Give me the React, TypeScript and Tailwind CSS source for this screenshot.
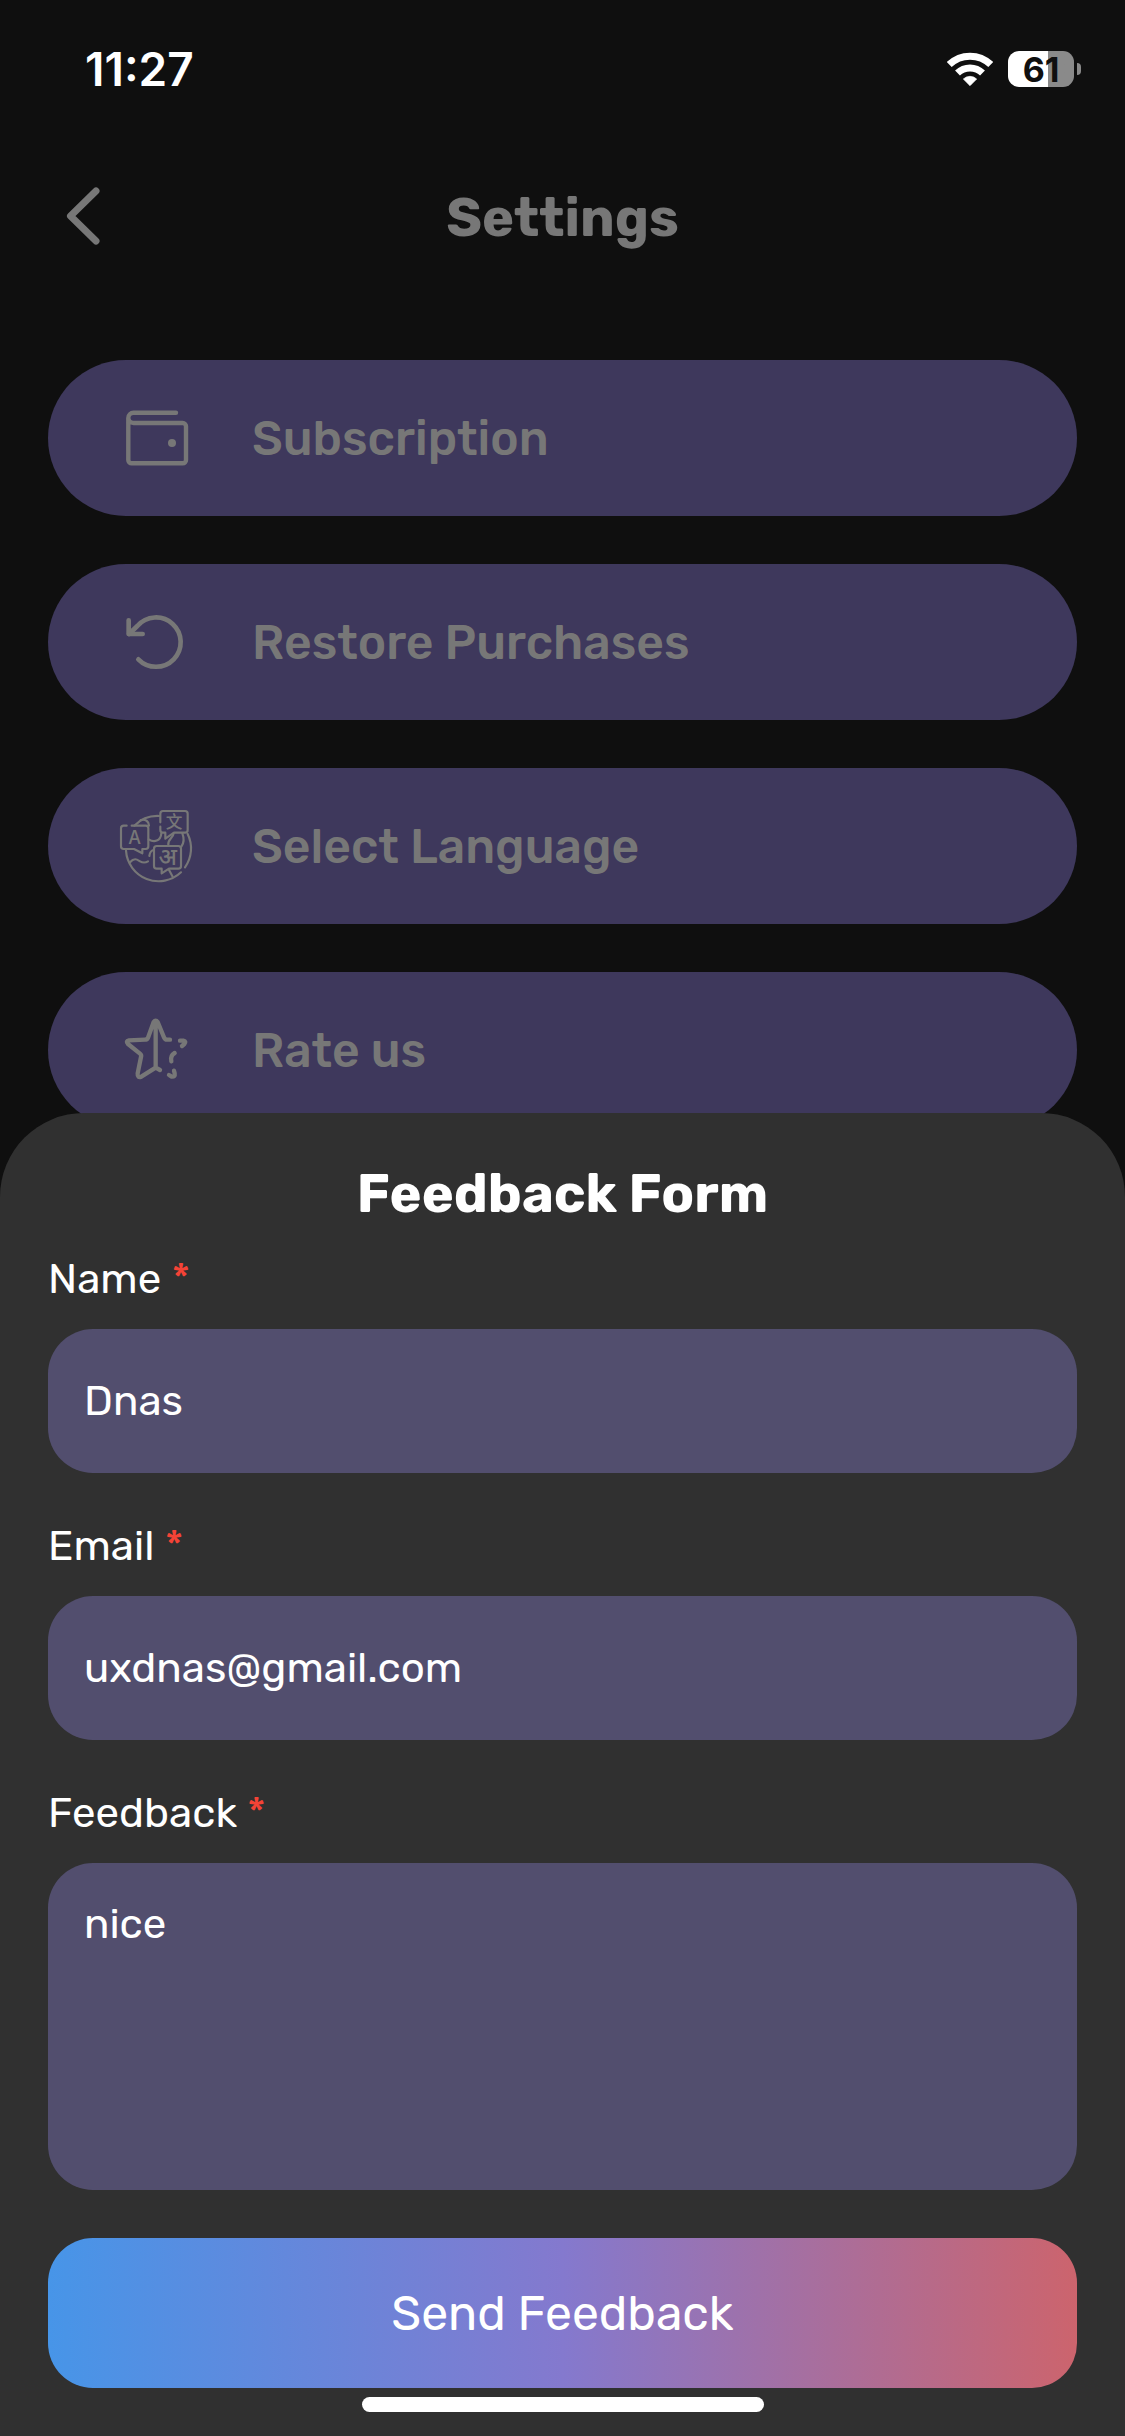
import { useState } from "react";

interface MenuItem {
  label: string;
  icon: React.ReactNode;
}

const MENU: MenuItem[] = [
  { label: "Subscription", icon: <WalletIcon /> },
  { label: "Restore Purchases", icon: <RestoreIcon /> },
  { label: "Select Language", icon: <LanguageIcon /> },
  { label: "Rate us", icon: <StarIcon /> },
];

const FIELD_CLS = "block w-full rounded-[45px] bg-[#524e6e] px-9 text-[42px] leading-[54px] text-white outline-none";

function WalletIcon() {
  return (
    <svg viewBox="0 0 80 80" className="size-20" fill="none" stroke="currentColor" strokeWidth="4.4" strokeLinecap="round" aria-hidden="true">
      <path d="M59 14.7H16.5a5.2 5.2 0 0 0-5.2 5.2V62a3.3 3.3 0 0 0 3.3 3.3H65.7A3.3 3.3 0 0 0 69 62V28.3a3.3 3.3 0 0 0-3.3-3.3H16.5a5.2 5.2 0 0 1-5.2-5.1" />
      <circle cx="55" cy="45" r="4" fill="currentColor" stroke="none" />
    </svg>
  );
}

function RestoreIcon() {
  return (
    <svg viewBox="51 36 240 240" className="size-20" fill="none" stroke="currentColor" strokeWidth="14" strokeLinecap="round" strokeLinejoin="round" aria-hidden="true">
      <path d="M115 208A74 74 0 1 0 112 108L87 132" />
      <path d="M86 91V132H128" />
    </svg>
  );
}

function LanguageIcon() {
  return (
    <svg viewBox="51 48 240 240" className="size-20" fill="none" stroke="currentColor" strokeWidth="6.5" strokeLinecap="round" strokeLinejoin="round" aria-hidden="true">
      <path d="M80 107H71Q63 107 63 115V169Q63 177 71 177H102L127 190V177H137Q145 177 145 169V115Q145 107 137 107H95" />
      <path d="M181 97V71Q181 63 189 63H255Q263 63 263 71V120Q263 128 255 128H222L196 146V128H189Q181 128 181 120V110" />
      <path d="M170 168H235Q243 168 243 176V228Q243 236 235 236H207L185 250V236H170Q162 236 162 228V176Q162 168 170 168Z" />
      <path d="M78 182A98 98 0 0 0 243 247M255 232A98 98 0 0 0 263 132M103 107A98 98 0 0 1 178 78" />
      <path d="M122 90Q145 86 147 107M146 148C162 158 182 154 184 130M90 217C104 201 113 210 120 214S136 219 144 214M148 198Q150 182 161 180M205 165C202 148 219 146 221 130M247 130Q256 153 244 170M206 238L218 260" />
      <g fill="currentColor" stroke="none" textAnchor="middle">
        <text x="104" y="161" fontSize="54" fontFamily="Inter, sans-serif">A</text>
        <text x="222" y="115" fontSize="50" fontFamily="'Noto Sans CJK SC', sans-serif">文</text>
        <text x="203" y="224" fontSize="70" fontFamily="'Noto Sans Devanagari', 'Noto Sans', sans-serif">अ</text>
      </g>
    </svg>
  );
}

function StarIcon() {
  return (
    <svg viewBox="51 30 240 240" className="size-20" fill="none" stroke="currentColor" strokeWidth="13" strokeLinecap="round" strokeLinejoin="round" aria-hidden="true">
      <path d="M210 119H201Q195 119 192 112L173 66Q167 58 161 66L144 113Q141 119 135 119L87 121Q76 123 84 132L120 161Q125 165 123 171L113 220Q112 235 124 230L167 203L180 210M167 64V203" />
      <path d="M240 122H250Q260 124 253 132L246 138M224 159Q210 167 214 184M207 225L215 230Q226 231 224 220L222 212" />
    </svg>
  );
}

function WifiIcon() {
  return (
    <svg viewBox="264 60 138 108" className="h-9 w-[46px]" fill="none" stroke="currentColor" aria-hidden="true">
      <path d="M270.8 100.6A89.5 89.5 0 0 1 395.2 100.6" strokeWidth="21" />
      <path d="M295.5 126.2A54 54 0 0 1 370.5 126.2" strokeWidth="21" />
      <path d="M333 164L313 144A29 29 0 0 1 353 144Z" fill="currentColor" strokeWidth="2" strokeLinejoin="round" />
    </svg>
  );
}

function FieldLabel({ htmlFor, children }: { htmlFor: string; children: React.ReactNode }) {
  return (
    <label htmlFor={htmlFor} className="mb-[19px] block text-[42px] leading-[62px] text-white">
      {children} <span className="text-[#f44336]">*</span>
    </label>
  );
}

export default function App() {
  const [name, setName] = useState("Dnas");
  const [email, setEmail] = useState("uxdnas@gmail.com");
  const [feedback, setFeedback] = useState("nice");

  return (
    <div className="relative min-h-screen overflow-hidden bg-[#0f0f0f] font-['Rubik','Inter',sans-serif]">
      <div className="flex h-[138px] items-center justify-between pr-11 pl-[85px] font-['Inter',sans-serif] text-white">
        <span className="text-[46px] font-semibold">11:27</span>
        <div className="flex items-center gap-[15px]">
          <WifiIcon />
          <div className="flex items-center gap-[3px]">
            <div className="flex h-9 w-[66px] items-center justify-center rounded-[11px] bg-linear-to-r from-white from-61% to-[#8a8a8a] to-61% text-[34px] font-bold text-[#0f0f0f]">
              61
            </div>
            <div className="h-3 w-1 rounded-r-full bg-[#8a8a8a]" />
          </div>
        </div>
      </div>

      <header className="grid h-40 grid-cols-[1fr_auto_1fr] items-center px-[60px] text-[#777777]">
        <button type="button" aria-label="Back" className="justify-self-start">
          <svg viewBox="0 0 48 64" className="h-16 w-12" fill="none" stroke="currentColor" strokeWidth="7" strokeLinecap="round" strokeLinejoin="round" aria-hidden="true">
            <path d="M36 5L10.500 30L36 55" />
          </svg>
        </button>
        <h1 className="text-[54px] leading-[66px] font-bold">Settings</h1>
      </header>

      <nav className="flex flex-col gap-12 px-12 pt-[62px]">
        {MENU.map((item) => (
          <button key={item.label} type="button"
            className="flex h-[156px] items-center gap-[55px] rounded-full bg-[#3e385c] pl-[69px] text-[48px] font-medium text-[#777777]">
            {item.icon}
            <span className="pt-0.5">{item.label}</span>
          </button>
        ))}
      </nav>

      <form onSubmit={(e) => e.preventDefault()}
        className="absolute inset-x-0 bottom-0 flex flex-col rounded-t-[84px] bg-[#303030] px-12 pt-12 pb-6">
        <h2 className="mb-[21px] text-center text-[54px] leading-[66px] font-bold text-white">Feedback Form</h2>
        <div className="mb-[42px]">
          <FieldLabel htmlFor="name">Name</FieldLabel>
          <input id="name" type="text" value={name} onChange={(e) => setName(e.target.value)}
            className={`${FIELD_CLS} h-36`} />
        </div>
        <div className="mb-[42px]">
          <FieldLabel htmlFor="email">Email</FieldLabel>
          <input id="email" type="email" value={email} onChange={(e) => setEmail(e.target.value)}
            className={`${FIELD_CLS} h-36`} />
        </div>
        <div className="mb-12">
          <FieldLabel htmlFor="feedback">Feedback</FieldLabel>
          <textarea id="feedback" value={feedback} onChange={(e) => setFeedback(e.target.value)}
            className={`${FIELD_CLS} h-[327px] resize-none py-[34px]`} />
        </div>
        <button type="submit"
          className="h-[150px] rounded-[45px] bg-linear-to-r/srgb from-[#4795e8] via-[#8479ce] to-[#cc646d] pt-0.5 text-[48px] text-white">
          Send Feedback
        </button>
        <div className="mt-[9px] h-[15px] w-[402px] self-center rounded-full bg-white" />
      </form>
    </div>
  );
}
